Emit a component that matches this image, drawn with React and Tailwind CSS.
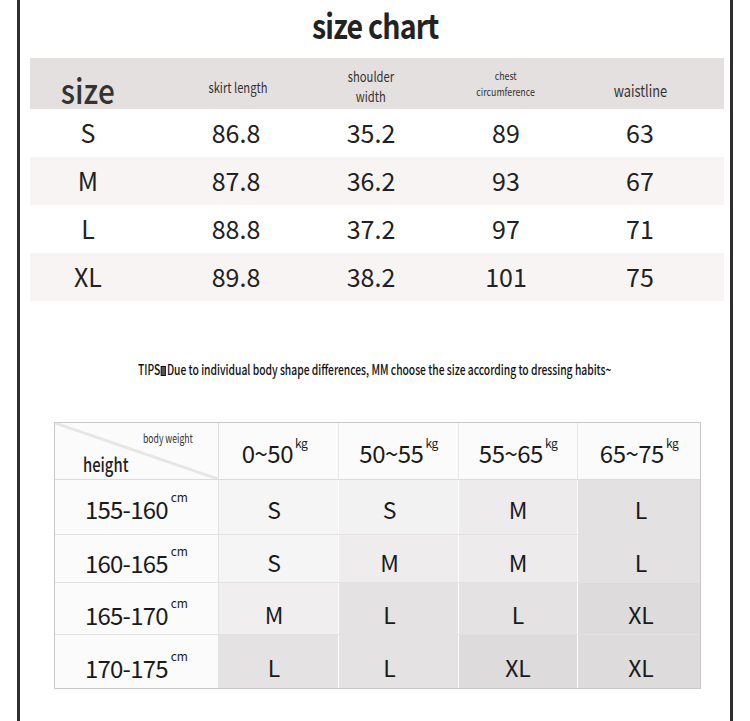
const cjk = "font-['Noto_Sans_CJK_SC','Noto_Sans',sans-serif]";

// condensed look: the shot uses a narrow face, so squeeze the text horizontally
const Narrow = ({ children, className = '' }) => (
  <span className={`inline-block whitespace-nowrap ${className}`}>{children}</span>
);

const sizeRows = [
  { size: 'S', skirt: '86.8', shoulder: '35.2', chest: '89', waist: '63', bg: 'bg-white' },
  { size: 'M', skirt: '87.8', shoulder: '36.2', chest: '93', waist: '67', bg: 'bg-[#f8f4f3]' },
  { size: 'L', skirt: '88.8', shoulder: '37.2', chest: '97', waist: '71', bg: 'bg-white' },
  { size: 'XL', skirt: '89.8', shoulder: '38.2', chest: '101', waist: '75', bg: 'bg-[#f8f4f3]' },
];

const weights = ['0~50', '50~55', '55~65', '65~75'];

const fitRows = [
  { h: '155-160', rowH: 'h-[55px]', pad: 'pt-[4px]', cells: [['S', 'bg-[#f6f5f5]'], ['S', 'bg-[#f3f2f2]'], ['M', 'bg-[#edebeb]'], ['L', 'bg-[#e3e1e1]']] },
  { h: '160-165', rowH: 'h-[48px]', pad: 'pt-[8px]', cells: [['S', 'bg-[#f6f5f5]'], ['M', 'bg-[#eeecec]'], ['M', 'bg-[#edebeb]'], ['L', 'bg-[#e3e1e1]']] },
  { h: '165-170', rowH: 'h-[52px]', pad: 'pt-[12px]', cells: [['M', 'bg-[#f0eeee]'], ['L', 'bg-[#e4e2e2]'], ['L', 'bg-[#e4e2e2]'], ['XL', 'bg-[#dddbdb]']] },
  { h: '170-175', rowH: 'h-[53px]', pad: 'pt-[12px]', cells: [['L', 'bg-[#e4e2e2]'], ['L', 'bg-[#e4e2e2]'], ['XL', 'bg-[#dddbdb]'], ['XL', 'bg-[#dddbdb]']] },
];

// letters in the shot sit a little off the column centres
const cellShift = ['pr-[9px]', 'pr-[18px]', 'pr-0', 'pl-[4px]'];

const cols = 'grid-cols-[133px_150px_116px_154px_114px_1fr]';

const SizeChart = () => (
  <div className={`${cjk} text-[#222]`}>
    <h1 className="box-content flex h-[38px] items-center justify-center pt-[5px] text-[34px] font-bold">
      <Narrow className="scale-x-[0.84] tracking-[-1px]">size chart</Narrow>
    </h1>

    <div className="ml-[10px] mt-[15px] w-[694px]">
      <div className={`grid h-[51px] ${cols} bg-[#e3e0df] text-[#333]`}>
        <div className="flex items-end justify-center pr-[17px] text-[35px] font-medium leading-[38px]">
          <Narrow className="mb-[1px] scale-x-[0.85]">size</Narrow>
        </div>
        <div className="flex items-center justify-center pt-[8px] text-[14px]">
          <Narrow className="scale-x-[0.8]">skirt length</Narrow>
        </div>
        <div className="flex flex-col items-center justify-center pt-[4px] text-[14px] leading-[20px]">
          <Narrow className="scale-x-[0.8]">shoulder</Narrow>
          <Narrow className="scale-x-[0.8]">width</Narrow>
        </div>
        <div className="flex flex-col items-center justify-center pb-[2px] text-[11px] leading-[16px]">
          <Narrow className="scale-x-[0.8]">chest</Narrow>
          <Narrow className="scale-x-[0.8]">circumference</Narrow>
        </div>
        <div className="flex items-center justify-center pt-[12px] text-[16px]">
          <Narrow className="scale-x-[0.8]">waistline</Narrow>
        </div>
        <div />
      </div>

      {sizeRows.map((r) => (
        <div key={r.size} className={`grid h-[48px] ${cols} items-center ${r.bg} text-[25px] text-[#222]`}>
          <div className="pr-[17px] text-center">{r.size}</div>
          <div className="pr-[4px] text-center">{r.skirt}</div>
          <div className="text-center">{r.shoulder}</div>
          <div className="text-center">{r.chest}</div>
          <div className="text-center">{r.waist}</div>
          <div />
        </div>
      ))}
    </div>
  </div>
);

const Tips = () => (
  <p className={`${cjk} mt-[58px] h-[20px] pl-[118px] text-[14px] font-medium leading-[20px] text-[#111]`}>
    <Narrow className="origin-left scale-x-[0.735]">
      TIPS
      <span className="mx-[1px] inline-block h-[10px] w-[7px] translate-y-[1px] border-[1.5px] border-[#111] bg-[#555]" />
      Due to individual body shape differences, MM choose the size according to dressing habits~
    </Narrow>
  </p>
);

const FitTable = () => (
  <div className={`ml-[34px] mt-[43px] w-[647px] border border-[#c9c9c9] ${cjk} text-[#1a1a1a]`}>
    <div className="grid h-[57px] grid-cols-[164px_120px_120px_119px_1fr] border-b border-[#dcdcdc] bg-[#fbfbfb]">
      <div className="relative border-r border-[#dcdcdc]">
        <svg className="absolute inset-0 h-full w-full" viewBox="0 0 164 57" preserveAspectRatio="none">
          <line x1="0" y1="0" x2="164" y2="57" stroke="#e6e6e6" strokeWidth="3" />
        </svg>
        <span className="absolute left-[88px] top-[6px] text-[12px] text-[#333]">
          <Narrow className="origin-left scale-x-[0.72]">body weight</Narrow>
        </span>
        <span className="absolute left-[28px] top-[27px] text-[19px] font-medium text-[#222]">
          <Narrow className="origin-left scale-x-[0.78]">height</Narrow>
        </span>
      </div>
      {weights.map((w, i) => (
        <div
          key={w}
          className={`flex items-center justify-center pt-[4px] text-[24px] tracking-[-0.5px] ${i === 0 ? 'pr-[8px]' : ''} ${i < 3 ? 'border-r border-[#e6e6e6]' : ''}`}
        >
          {w}
          <sup className="ml-[2px] -translate-y-[4px] text-[12px]">kg</sup>
        </div>
      ))}
    </div>

    {fitRows.map((r, ri) => (
      <div key={r.h} className={`grid ${r.rowH} grid-cols-[164px_120px_120px_119px_1fr] ${ri < 3 ? 'border-b border-[#e2e2e2]' : ''}`}>
        <div className={`flex items-center justify-center border-r border-[#e2e2e2] bg-[#fbfbfb] ${r.pad} text-[24px] tracking-[-0.8px]`}>
          {r.h}
          <sup className="ml-[3px] -translate-y-[6px] text-[12px] tracking-normal">cm</sup>
        </div>
        {r.cells.map(([s, bg], ci) => (
          <div
            key={ci}
            className={`flex items-center justify-center ${r.pad} ${cellShift[ci]} text-[23px] ${bg} ${ci < 3 ? 'border-r border-white' : ''}`}
          >
            {s}
          </div>
        ))}
      </div>
    ))}
  </div>
);

export default function App() {
  return (
    <div className="h-[721px] w-[750px] overflow-hidden bg-white px-[17px]">
      <div className="h-full w-[716px] border-x-[3px] border-[#2e2e2e]">
        <SizeChart />
        <Tips />
        <FitTable />
      </div>
    </div>
  );
}
